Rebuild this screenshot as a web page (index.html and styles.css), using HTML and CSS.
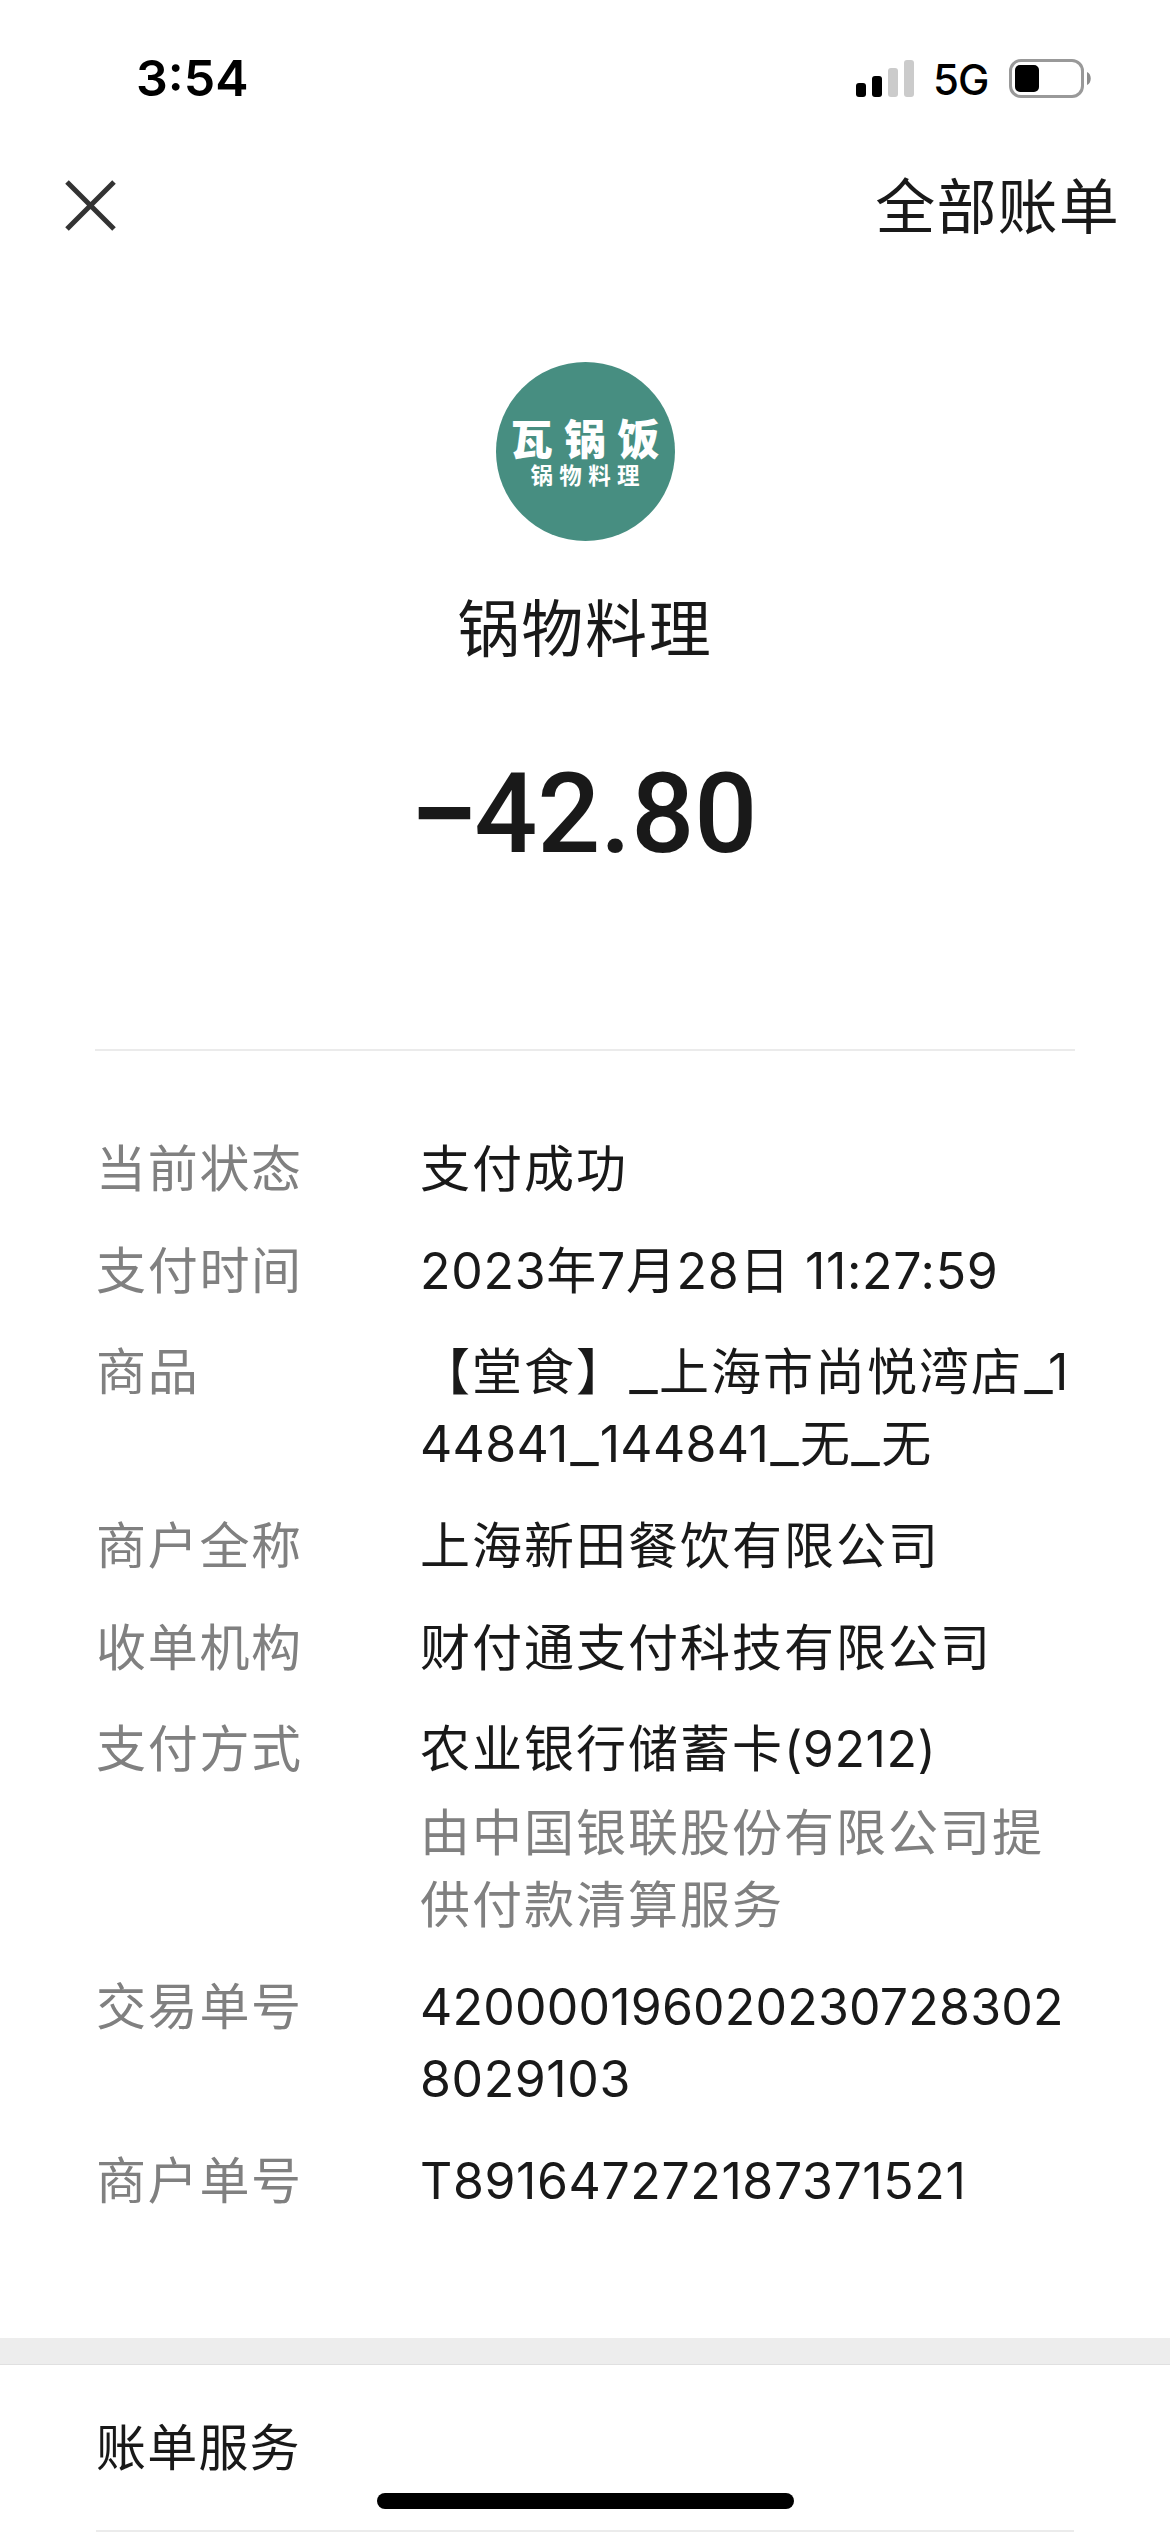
FILE: index.html
```html
<!DOCTYPE html>
<html lang="zh-CN">
<head>
    <meta charset="UTF-8">
    <meta name="viewport" content="width=device-width, initial-scale=1.0">
    <title>账单详情</title>
    <link rel="stylesheet" href="styles.css">
</head>
<body>

<div class="page">
    <div class="status-bar">
        <span class="time">3:54</span>
        <div class="status-icons">
            <svg class="signal" width="58" height="37" viewBox="0 0 58 37">
                <rect x="0" y="23" width="10" height="14" rx="3"/>
                <rect x="16" y="16" width="10" height="21" rx="3"/>
                <rect x="32" y="8" width="10" height="29" rx="3" fill="#cbcbcb"/>
                <rect x="48" y="0" width="10" height="37" rx="3" fill="#cbcbcb"/>
            </svg>
            <span class="network">5G</span>
            <svg class="battery" width="83" height="39" viewBox="0 0 83 39">
                <rect x="1.5" y="1.5" width="72" height="36" rx="10.5" fill="none" stroke="#999" stroke-width="3"/>
                <rect x="6" y="6" width="24" height="27" rx="5"/>
                <path d="M78 13c5 2 5 11 0 13z" fill="#8c8c8c"/>
            </svg>
        </div>
    </div>

    <div class="nav">
        <svg class="close" width="51" height="51" viewBox="0 0 51 51">
            <path d="M2 2l47 47M49 2L2 49" stroke="#333" stroke-width="5"/>
        </svg>
        <span class="all-bills">全部账单</span>
    </div>

    <div class="merchant">
        <div class="logo">
            <span class="logo-title">瓦锅饭</span>
            <span class="logo-sub">锅物料理</span>
        </div>
        <div class="merchant-name">锅物料理</div>
        <div class="amount"><span class="minus">−</span>42.80</div>
    </div>

    <div class="details">
        <div class="row">
            <span class="label">当前状态</span>
            <div class="value">支付成功</div>
        </div>
        <div class="row">
            <span class="label">支付时间</span>
            <div class="value"><span class="date">2023年7月28日 11:27:59</span></div>
        </div>
        <div class="row">
            <span class="label">商品</span>
            <div class="value">【堂食】<span class="dash">_</span>上海市尚悦湾店<span class="dash last">_</span>1<br><span class="code">44841<span class="dash">_</span>144841<span class="dash">_</span>无<span class="dash">_</span>无</span></div>
        </div>
        <div class="row">
            <span class="label">商户全称</span>
            <div class="value">上海新田餐饮有限公司</div>
        </div>
        <div class="row">
            <span class="label">收单机构</span>
            <div class="value">财付通支付科技有限公司</div>
        </div>
        <div class="row">
            <span class="label">支付方式</span>
            <div class="value">
                农业银行储蓄卡<span class="num">(9212)</span>
                <div class="note">由中国银联股份有限公司提<br>供付款清算服务</div>
            </div>
        </div>
        <div class="row">
            <span class="label">交易单号</span>
            <div class="value"><span class="long-num">420000196020230728302</span><br><span class="num">8029103</span></div>
        </div>
        <div class="row">
            <span class="label">商户单号</span>
            <div class="value"><span class="num">T891647272187371521</span></div>
        </div>
    </div>

    <div class="separator"></div>

    <div class="services">账单服务</div>
    <div class="home-bar"></div>
</div>

</body>
</html>
```

FILE: styles.css
```css
* {
    box-sizing: border-box;
}
body {
    margin: 0;
    background-color: #fff;
    color: #191919;
    font-family: Inter, "Noto Sans CJK SC", sans-serif;
}
.page {
    position: relative;
    width: 1170px;
    height: 2532px;
    overflow: hidden;
}
.status-bar {
    display: flex;
    justify-content: space-between;
    height: 155px;
    padding: 48px 78px 0 136px;
    color: #000;
}
.time {
    font-size: 50px;
    font-weight: 600;
    line-height: 60px;
}
.status-icons {
    display: flex;
    height: 60px;
    align-items: center;
}
.signal {
    margin-right: 19px;
}
.network {
    width: 55px;
    margin-right: 21px;
    font-size: 42px;
    font-weight: 500;
    letter-spacing: -1px;
    line-height: 60px;
    padding-top: 3px;
}
.nav {
    display: flex;
    justify-content: space-between;
    align-items: center;
    height: 101px;
    padding: 0 50px 0 65px;
}
.all-bills {
    padding-top: 4px;
    font-size: 60px;
    letter-spacing: 1.2px;
    line-height: 97px;
}
.merchant {
    display: flex;
    flex-direction: column;
    align-items: center;
    height: 795px;
    margin: 0 95px;
    padding-top: 106px;
    border-bottom: 2px solid #ebebeb;
}
.logo {
    display: flex;
    flex-direction: column;
    align-items: center;
    width: 179px;
    height: 179px;
    padding-top: 55px;
    border-radius: 50%;
    background-color: #478e81;
    color: #fff;
    font-weight: 900;
    white-space: nowrap;
}
.logo-title {
    font-size: 42px;
    letter-spacing: 11.5px;
    line-height: 46px;
    margin-right: -11.5px;
}
.logo-sub {
    font-size: 22.5px;
    font-weight: 700;
    letter-spacing: 6.4px;
    line-height: 25px;
    margin-right: -6.4px;
}
.merchant-name {
    margin-top: 49px;
    font-size: 62px;
    letter-spacing: 1.8px;
    line-height: 80px;
}
.amount {
    margin-top: 79px;
    font-family: Roboto, sans-serif;
    font-size: 111px;
    font-weight: 500;
    line-height: 130px;
}
.minus {
    display: inline-block;
    font-weight: 700;
    transform: scaleX(1.1);
}
.details {
    display: flex;
    flex-direction: column;
    gap: 29.7px;
    height: 1287px;
    padding: 82px 96px 0;
    font-size: 50px;
    letter-spacing: 2px;
    line-height: 72px;
    white-space: nowrap;
}
.row {
    display: flex;
}
.label {
    width: 324px;
    color: #808080;
    letter-spacing: 1.7px;
}
.date {
    letter-spacing: 0.7px;
}
.code {
    letter-spacing: 0.3px;
}
.num {
    letter-spacing: 0.6px;
}
.long-num {
    letter-spacing: 0.2px;
}
.dash {
    display: inline-block;
    width: 31px;
    letter-spacing: 0;
    text-align: center;
    transform: scaleX(1.25);
}
.last {
    margin-right: -6px;
}
.note {
    margin-top: 12px;
    color: #808080;
}
.separator {
    height: 27px;
    background-color: #ededed;
    border-bottom: 1px solid #e0e0e0;
}
.services {
    height: 167px;
    margin: 0 96px;
    padding-top: 2px;
    border-bottom: 2px solid #ebebeb;
    font-size: 50px;
    letter-spacing: 1.2px;
    line-height: 163px;
}
/* sits over the page content */
.home-bar {
    position: absolute;
    left: 377px;
    bottom: 23px;
    width: 417px;
    height: 16px;
    border-radius: 8px;
    background-color: #000;
}
```
